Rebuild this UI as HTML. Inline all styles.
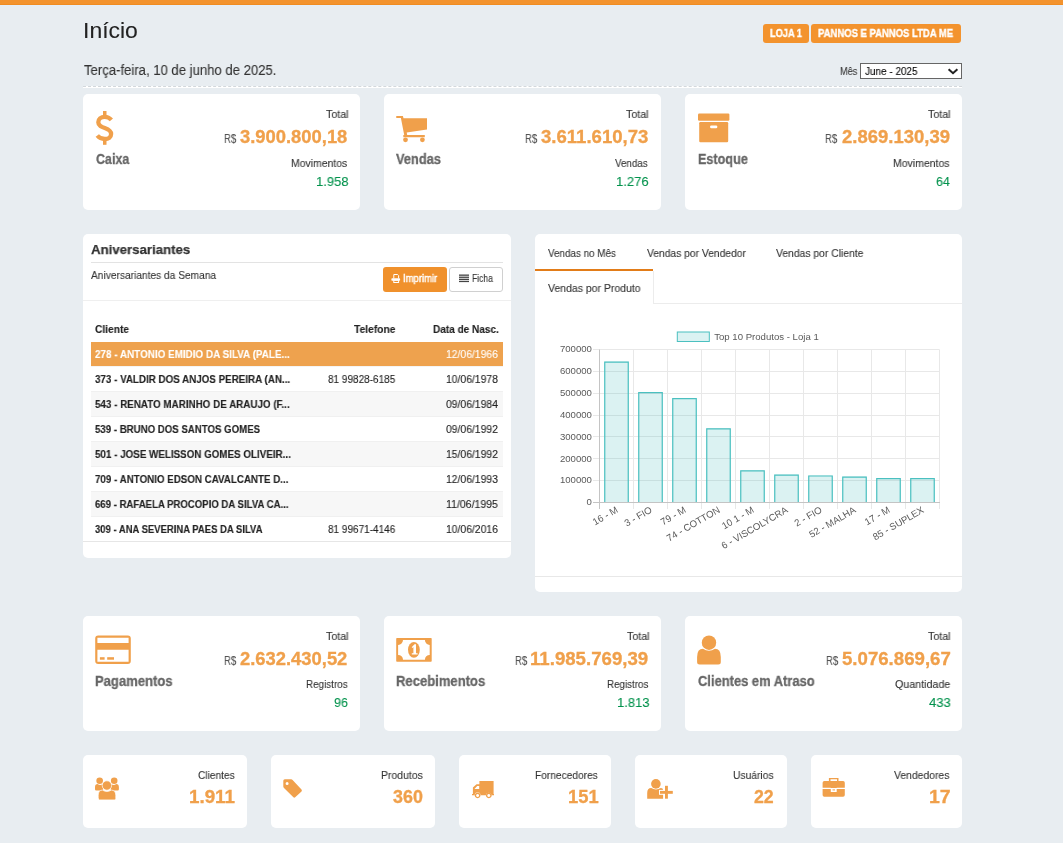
<!DOCTYPE html>
<html><head><meta charset="utf-8"><title>Início</title>
<style>
html,body{margin:0;padding:0;}
body{width:1063px;height:843px;overflow:hidden;background:#e8edf1;position:relative;font-family:"Liberation Sans",sans-serif;}
.t{position:absolute;white-space:nowrap;transform-origin:0 0;will-change:transform;font-family:"Liberation Sans",sans-serif;}
.a{position:absolute;}
.box{position:absolute;background:#fff;border-radius:5px;}
.ln{position:absolute;height:1px;}
svg.ic{position:absolute;left:0;top:0;overflow:visible;will-change:transform;}
</style></head><body>
<!-- top bar -->
<div class="a" style="left:0;top:0;width:1063px;height:4px;background:#f3932e"></div>
<div class="a" style="left:0;top:4px;width:1063px;height:1px;background:#f08c22"></div>
<div class="a" style="left:0;top:5px;width:1063px;height:1px;background:#e4eef8"></div>

<!-- badges -->
<div class="a" style="left:763px;top:24px;width:46px;height:19px;background:#f3932e;border-radius:3px"></div>
<div class="a" style="left:811px;top:24px;width:150px;height:19px;background:#f3932e;border-radius:3px"></div>

<!-- select -->
<div class="a" style="left:860px;top:63px;width:100px;height:14px;border:1px solid #666;background:#fff"></div>
<svg class="ic" width="1063" height="843" style="width:1063px;height:843px"><path d="M948.6,69.3 L953,73.2 L957.4,69.3" fill="none" stroke="#222" stroke-width="2.1"/></svg>

<!-- dashed separator -->
<div class="a" style="left:83px;top:86px;width:879px;height:2px;background:#fff"></div>
<div class="a" style="left:83px;top:86px;width:879px;height:0;border-top:1px dashed #d3d8dc"></div>

<!-- row 1 cards -->
<div class="box" style="left:83px;top:94px;width:277px;height:116px"></div>
<div class="box" style="left:384px;top:94px;width:277px;height:116px"></div>
<div class="box" style="left:685px;top:94px;width:277px;height:116px"></div>

<!-- aniversariantes panel -->
<div class="box" style="left:83px;top:234px;width:428px;height:324px"></div>
<div class="ln" style="left:91px;top:262px;width:412px;background:#e3e3e3"></div>
<div class="a" style="left:383px;top:267px;width:64px;height:25px;background:#f0912c;border-radius:3px"></div>
<div class="a" style="left:449px;top:267px;width:52px;height:23px;background:#fff;border:1px solid #d0d0d0;border-radius:3px"></div>
<div class="ln" style="left:83px;top:300px;width:428px;background:#efefef"></div>
<div class="a" style="left:91px;top:342px;width:412px;height:24px;background:#eea24e"></div>
<div class="ln" style="left:91px;top:366px;width:412px;background:#f4f4f4"></div>
<div class="ln" style="left:91px;top:391px;width:412px;background:#f0f0f0"></div>
<div class="a" style="left:91px;top:392px;width:412px;height:25px;background:#f7f7f7"></div>
<div class="ln" style="left:91px;top:416px;width:412px;background:#f0f0f0"></div>
<div class="ln" style="left:91px;top:441px;width:412px;background:#f0f0f0"></div>
<div class="a" style="left:91px;top:442px;width:412px;height:25px;background:#f7f7f7"></div>
<div class="ln" style="left:91px;top:466px;width:412px;background:#f0f0f0"></div>
<div class="ln" style="left:91px;top:491px;width:412px;background:#f0f0f0"></div>
<div class="a" style="left:91px;top:492px;width:412px;height:25px;background:#f7f7f7"></div>
<div class="ln" style="left:91px;top:516px;width:412px;background:#f0f0f0"></div>
<div class="ln" style="left:83px;top:541px;width:428px;background:#e6e6e6"></div>

<!-- chart panel -->
<div class="box" style="left:535px;top:234px;width:427px;height:358px"></div>
<div class="a" style="left:535px;top:269px;width:118px;height:2px;background:#e27c18"></div>
<div class="a" style="left:653px;top:271px;width:1px;height:33px;background:#ececec"></div>
<div class="ln" style="left:653px;top:303px;width:309px;background:#ececec"></div>
<div class="ln" style="left:535px;top:576px;width:427px;background:#e8e8e8"></div>
<svg class="ic" width="1063" height="843" style="width:1063px;height:843px">
<g stroke="#e8e8e8" stroke-width="1" fill="none">
<path d="M593,502.5 H939.5"/>
<path d="M593,480.5 H939.5"/>
<path d="M593,458.5 H939.5"/>
<path d="M593,436.5 H939.5"/>
<path d="M593,415.5 H939.5"/>
<path d="M593,393.5 H939.5"/>
<path d="M593,371.5 H939.5"/>
<path d="M593,349.5 H939.5"/>
<path d="M599.5,349.5 V509"/>
<path d="M633.5,349.5 V509"/>
<path d="M667.5,349.5 V509"/>
<path d="M701.5,349.5 V509"/>
<path d="M735.5,349.5 V509"/>
<path d="M769.5,349.5 V509"/>
<path d="M803.5,349.5 V509"/>
<path d="M837.5,349.5 V509"/>
<path d="M871.5,349.5 V509"/>
<path d="M905.5,349.5 V509"/>
<path d="M939.5,349.5 V509"/>
</g>
<rect x="604.25" y="361.52" width="24.50" height="140.98" fill="rgba(75,192,192,0.2)"/>
<path d="M604.75,502.5 V362.12 H628.25 V502.5" fill="none" stroke="rgb(75,192,192)" stroke-width="1.2"/>
<rect x="638.25" y="392.12" width="24.50" height="110.38" fill="rgba(75,192,192,0.2)"/>
<path d="M638.75,502.5 V392.72 H662.25 V502.5" fill="none" stroke="rgb(75,192,192)" stroke-width="1.2"/>
<rect x="672.25" y="398.02" width="24.50" height="104.48" fill="rgba(75,192,192,0.2)"/>
<path d="M672.75,502.5 V398.62 H696.25 V502.5" fill="none" stroke="rgb(75,192,192)" stroke-width="1.2"/>
<rect x="706.25" y="428.19" width="24.50" height="74.31" fill="rgba(75,192,192,0.2)"/>
<path d="M706.75,502.5 V428.79 H730.25 V502.5" fill="none" stroke="rgb(75,192,192)" stroke-width="1.2"/>
<rect x="740.25" y="470.37" width="24.50" height="32.13" fill="rgba(75,192,192,0.2)"/>
<path d="M740.75,502.5 V470.97 H764.25 V502.5" fill="none" stroke="rgb(75,192,192)" stroke-width="1.2"/>
<rect x="774.25" y="474.52" width="24.50" height="27.98" fill="rgba(75,192,192,0.2)"/>
<path d="M774.75,502.5 V475.12 H798.25 V502.5" fill="none" stroke="rgb(75,192,192)" stroke-width="1.2"/>
<rect x="808.25" y="475.40" width="24.50" height="27.10" fill="rgba(75,192,192,0.2)"/>
<path d="M808.75,502.5 V476.00 H832.25 V502.5" fill="none" stroke="rgb(75,192,192)" stroke-width="1.2"/>
<rect x="842.25" y="476.49" width="24.50" height="26.01" fill="rgba(75,192,192,0.2)"/>
<path d="M842.75,502.5 V477.09 H866.25 V502.5" fill="none" stroke="rgb(75,192,192)" stroke-width="1.2"/>
<rect x="876.25" y="478.02" width="24.50" height="24.48" fill="rgba(75,192,192,0.2)"/>
<path d="M876.75,502.5 V478.62 H900.25 V502.5" fill="none" stroke="rgb(75,192,192)" stroke-width="1.2"/>
<rect x="910.25" y="478.02" width="24.50" height="24.48" fill="rgba(75,192,192,0.2)"/>
<path d="M910.75,502.5 V478.62 H934.25 V502.5" fill="none" stroke="rgb(75,192,192)" stroke-width="1.2"/>
<path d="M599.5,349.5 V509 M593,502.5 H940" stroke="#c4c4c4" stroke-width="1" fill="none"/>
<g font-family="Liberation Sans" font-size="9.6" fill="#5a5a5a">
<text x="591.9" y="505.30" text-anchor="end">0</text>
<text x="591.9" y="483.44" text-anchor="end">100000</text>
<text x="591.9" y="461.59" text-anchor="end">200000</text>
<text x="591.9" y="439.73" text-anchor="end">300000</text>
<text x="591.9" y="417.87" text-anchor="end">400000</text>
<text x="591.9" y="396.02" text-anchor="end">500000</text>
<text x="591.9" y="374.16" text-anchor="end">600000</text>
<text x="591.9" y="352.30" text-anchor="end">700000</text>
<rect x="677.3" y="332" width="32" height="9.5" fill="rgba(75,192,192,0.2)" stroke="rgb(75,192,192)" stroke-width="1"/>
<text x="714.2" y="340.2">Top 10 Produtos - Loja 1</text>
<text transform="translate(617.00,509.00) rotate(-30)" text-anchor="end" y="3.3">16 - M</text>
<text transform="translate(651.00,509.00) rotate(-30)" text-anchor="end" y="3.3">3 - FIO</text>
<text transform="translate(685.00,509.00) rotate(-30)" text-anchor="end" y="3.3">79 - M</text>
<text transform="translate(719.00,509.00) rotate(-30)" text-anchor="end" y="3.3">74 - COTTON</text>
<text transform="translate(753.00,509.00) rotate(-30)" text-anchor="end" y="3.3">10 1 - M</text>
<text transform="translate(787.00,509.00) rotate(-30)" text-anchor="end" y="3.3">6 - VISCOLYCRA</text>
<text transform="translate(821.00,509.00) rotate(-30)" text-anchor="end" y="3.3">2 - FIO</text>
<text transform="translate(855.00,509.00) rotate(-30)" text-anchor="end" y="3.3">52 - MALHA</text>
<text transform="translate(889.00,509.00) rotate(-30)" text-anchor="end" y="3.3">17 - M</text>
<text transform="translate(923.00,509.00) rotate(-30)" text-anchor="end" y="3.3">85 - SUPLEX</text>
</g></svg>

<!-- row 3 cards -->
<div class="box" style="left:83px;top:616px;width:277px;height:115px"></div>
<div class="box" style="left:384px;top:616px;width:277px;height:115px"></div>
<div class="box" style="left:685px;top:616px;width:277px;height:115px"></div>

<!-- row 4 small cards -->
<div class="box" style="left:83px;top:755px;width:164px;height:73px"></div>
<div class="box" style="left:271px;top:755px;width:164px;height:73px"></div>
<div class="box" style="left:459px;top:755px;width:152px;height:73px"></div>
<div class="box" style="left:635px;top:755px;width:152px;height:73px"></div>
<div class="box" style="left:811px;top:755px;width:151px;height:73px"></div>

<!-- icons -->
<svg class="ic" width="1063" height="843" style="width:1063px;height:843px">
<g fill="#f0a04b">
  <!-- dollar -->
  <rect x="103" y="111" width="3.5" height="5"/>
  <rect x="103" y="139.5" width="3.5" height="5.3"/>
  <!-- cart -->
  <path d="M396,117 Q396,116 397,116 H402.9 L403.5,118.3 H427 V129.5 L406.7,132.6 L407.2,135 H424.8 V137.2 H403.3 V135 H404.2 L400.9,118.1 H397 Q396,118.1 396,117 Z"/>
  <circle cx="405.5" cy="139.8" r="2.4"/>
  <circle cx="422.4" cy="139.8" r="2.4"/>
  <!-- archive box -->
  <rect x="698" y="113.6" width="31.4" height="7.1" rx="1.2"/>
  <rect x="699.2" y="122" width="29" height="20.2" rx="1.2"/>
  <!-- credit card -->
  <path fill-rule="evenodd" d="M98.2,635.6 H127.8 Q130.8,635.6 130.8,638.6 V661 Q130.8,664 127.8,664 H98.2 Q95.2,664 95.2,661 V638.6 Q95.2,635.6 98.2,635.6 Z M97.4,637.8 V643.1 H128.6 V637.8 Z M97.4,649.7 V661.8 H128.6 V649.7 Z"/>
  <rect x="99.9" y="657.2" width="4.7" height="2.5"/>
  <rect x="107.2" y="657.2" width="6.8" height="2.5"/>
  <!-- money -->
  <path fill-rule="evenodd" d="M397,638 H431 Q431.7,638 431.7,638.7 V661 Q431.7,661.7 431,661.7 H397 Q396.2,661.7 396.2,661 V638.7 Q396.2,638 397,638 Z M403,640.1 A4.8,4.8 0 0 1 398.1,644.9 V654.9 A4.8,4.8 0 0 1 403,659.7 H424.9 A4.8,4.8 0 0 1 429.7,654.9 V644.9 A4.8,4.8 0 0 1 424.9,640.1 Z"/>
  <ellipse cx="413.9" cy="649.8" rx="5.9" ry="7.9"/>
  <!-- user -->
  <circle cx="709" cy="642.7" r="7.2"/>
  <path d="M697.1,664.5 V657 Q697.1,648.7 703,648.7 Q706,650.7 709,650.7 Q712,650.7 715,648.7 Q720.8,648.7 720.8,657 V662 Q720.8,664.5 718.3,664.5 H699.6 Q697.1,664.5 697.1,662 Z"/>
  <!-- users group -->
  <circle cx="99.65" cy="780.8" r="3.3"/>
  <circle cx="114.2" cy="780.8" r="3.3"/>
  <path d="M95,789.2 V787.2 C95,785.3 96,784.1 97.6,784.1 C98.5,784.7 99.4,784.9 100.2,784.9 C101,784.9 101.8,784.7 102.6,784.3 L103.2,790.4 H96.2 Q95,790.4 95,789.2 Z"/>
  <path d="M118.9,789.2 V787.2 C118.9,785.3 117.9,784.1 116.3,784.1 C115.4,784.7 114.5,784.9 113.7,784.9 C112.9,784.9 112.1,784.7 111.3,784.3 L110.7,790.4 H117.7 Q118.9,790.4 118.9,789.2 Z"/>
  <circle cx="106.9" cy="785.5" r="4.7" stroke="#fff" stroke-width="0.7"/>
  <path d="M98.2,799.8 V795.2 C98.2,792 99.8,790.1 102.4,790.1 C103.9,791 105.4,791.5 106.9,791.5 C108.4,791.5 109.9,791 111.4,790.1 C114,790.1 115.8,792 115.8,795.2 V798.5 Q115.8,799.9 114.4,799.9 H99.6 Q98.2,799.9 98.2,798.5 Z" stroke="#fff" stroke-width="0.7"/>
  <!-- tag -->
  <path fill-rule="evenodd" d="M284.8,779.3 H291.2 Q292,779.3 292.6,779.9 L301.5,789.6 Q302.3,790.5 301.5,791.4 L295.2,797.3 Q294.3,798.1 293.4,797.3 L284,788 Q283.3,787.3 283.3,786.4 V780.8 Q283.3,779.3 284.8,779.3 Z M287.1,782 A1.5,1.5 0 1 0 287.1,785 A1.5,1.5 0 1 0 287.1,782 Z"/>
  <!-- truck -->
  <path fill-rule="evenodd" d="M479.4,781.1 H493.6 V794 H494 V795.2 H491.6 A2.9,2.9 0 0 0 485.9,795.2 H480.5 A2.9,2.9 0 0 0 474.7,795.2 H472 V794 H472.9 V787.5 L476.5,784.2 H479.4 Z M474.5,789 H479.2 V785.9 H477.2 Z"/>
  <path fill-rule="evenodd" d="M477.6,792.5 A2.9,2.9 0 1 1 477.59,792.5 Z M477.6,793.9 A1.5,1.5 0 1 0 477.61,793.9 Z"/>
  <path fill-rule="evenodd" d="M488.8,792.5 A2.9,2.9 0 1 1 488.79,792.5 Z M488.8,793.9 A1.5,1.5 0 1 0 488.81,793.9 Z"/>
  <!-- user plus -->
  <circle cx="655.9" cy="783.9" r="4.8"/>
  <path d="M647.2,798.7 V793 Q647.2,788.1 651.2,788.1 Q653.5,789.4 656,789.4 Q658.5,789.4 660.8,788.1 Q663.1,788.1 663.1,790 V798.7 Z"/>
  <rect x="659" y="789.9" width="14.8" height="4.9" fill="#fff"/>
  <rect x="664" y="784.8" width="4.9" height="14.9" fill="#fff"/>
  <rect x="665" y="785.8" width="2.9" height="12.9"/>
  <rect x="660" y="790.9" width="12.8" height="2.9"/>
  <!-- briefcase -->
  <path fill-rule="evenodd" d="M828.9,777.9 H838.5 V781.1 H837 V779.3 H830.5 V781.1 H828.9 Z"/>
  <path d="M822.6,787.7 V782.8 Q822.6,781.1 824.3,781.1 H843.1 Q844.8,781.1 844.8,782.8 V787.7 H836.7 V788 H830.8 V787.7 Z"/>
  <path d="M822.6,789.1 H830.8 V792 H836.7 V789.1 H844.8 V795.1 Q844.8,796.8 843.1,796.8 H824.3 Q822.6,796.8 822.6,795.1 Z"/>
  <rect x="832.5" y="789.4" width="2.5" height="1"/>
</g>
<!-- dollar S -->
<path d="M111.4,119.9 C109.6,117.9 107.5,116.8 104.8,116.8 C100.8,116.8 98.3,119 98.3,122.2 C98.3,125.8 101.5,126.9 104.8,128 C108.5,129.3 111.1,130.6 111.1,134 C111.1,137.3 108.5,139 104.8,139 C101.5,139 99,137.6 97.3,135.5" fill="none" stroke="#f0a04b" stroke-width="4.3"/>
<!-- archive slot -->
<rect x="710.1" y="125.4" width="7.2" height="2.9" rx="1.2" fill="#fff"/>
<!-- money "1" -->
<path d="M411.7,647.2 L414.5,644.3 H416 V653.2 H417.6 V654.6 H411.8 V653.2 H413.4 V647.1 L412.6,647.9 Z" fill="#fff"/>
<!-- printer -->
<g fill="none" stroke="#fff" stroke-width="1">
  <path d="M393.8,278.4 V274.5 H397.6 L398.6,275.5 V278.4"/>
  <rect x="393.8" y="280.2" width="4.8" height="2.3"/>
</g>
<rect x="391.4" y="278.2" width="8.7" height="2.6" rx="0.8" fill="#fff"/>
<!-- list icon -->
<g fill="#444">
  <rect x="459" y="274.5" width="10" height="1.3"/>
  <rect x="459" y="276.6" width="10" height="1.3"/>
  <rect x="459" y="278.7" width="10" height="1.3"/>
  <rect x="459" y="280.8" width="10" height="1.3"/>
</g>
</svg>

<div class="t" style="left:82.66px;top:20px;font-size:22.5px;line-height:22.5px;color:#222;-webkit-text-stroke:0.1px currentColor;transform:scaleX(1.0202);">Início</div>
<div class="t" style="left:84.00px;top:63px;font-size:14px;line-height:14px;color:#333;-webkit-text-stroke:0.1px currentColor;transform:scaleX(0.9365);">Terça-feira, 10 de junho de 2025.</div>
<div class="t" style="left:769.60px;top:28px;font-size:10.5px;line-height:10.5px;color:#fff;font-weight:bold;-webkit-text-stroke:0.35px currentColor;transform:scaleX(0.8776);">LOJA 1</div>
<div class="t" style="left:817.70px;top:28px;font-size:10.5px;line-height:10.5px;color:#fff;font-weight:bold;-webkit-text-stroke:0.35px currentColor;transform:scaleX(0.9038);">PANNOS E PANNOS LTDA ME</div>
<div class="t" style="left:840.00px;top:66px;font-size:11px;line-height:11px;color:#333;-webkit-text-stroke:0.1px currentColor;transform:scaleX(0.8317);">Mês</div>
<div class="t" style="left:864.60px;top:66px;font-size:11px;line-height:11px;color:#000;-webkit-text-stroke:0.1px currentColor;transform:scaleX(0.9037);">June - 2025</div>
<div class="t" style="left:95.80px;top:152px;font-size:14px;line-height:14px;color:#666;font-weight:bold;-webkit-text-stroke:0.3px currentColor;transform:scaleX(0.8916);">Caixa</div>
<div class="t" style="left:325.60px;top:109px;font-size:11px;line-height:11px;color:#333;-webkit-text-stroke:0.1px currentColor;transform:scaleX(0.9697);">Total</div>
<div class="t" style="left:223.50px;top:133px;font-size:12px;line-height:12px;color:#555;-webkit-text-stroke:0.1px currentColor;transform:scaleX(0.7915);">R$</div>
<div class="t" style="left:240.10px;top:129px;font-size:17.5px;line-height:17.5px;color:#f0a04b;font-weight:bold;-webkit-text-stroke:0.3px currentColor;transform:scaleX(1.0503);">3.900.800,18</div>
<div class="t" style="left:291.00px;top:158px;font-size:11px;line-height:11px;color:#333;-webkit-text-stroke:0.1px currentColor;transform:scaleX(0.9482);">Movimentos</div>
<div class="t" style="left:315.64px;top:175px;font-size:13.5px;line-height:13.5px;color:#00924c;-webkit-text-stroke:0.1px currentColor;transform:scaleX(0.9636);">1.958</div>
<div class="t" style="left:396.30px;top:152px;font-size:14px;line-height:14px;color:#666;font-weight:bold;-webkit-text-stroke:0.3px currentColor;transform:scaleX(0.9159);">Vendas</div>
<div class="t" style="left:626.40px;top:109px;font-size:11px;line-height:11px;color:#333;-webkit-text-stroke:0.1px currentColor;transform:scaleX(0.9697);">Total</div>
<div class="t" style="left:524.60px;top:133px;font-size:12px;line-height:12px;color:#555;-webkit-text-stroke:0.1px currentColor;transform:scaleX(0.7915);">R$</div>
<div class="t" style="left:540.90px;top:129px;font-size:17.5px;line-height:17.5px;color:#f0a04b;font-weight:bold;-webkit-text-stroke:0.3px currentColor;transform:scaleX(1.0603);">3.611.610,73</div>
<div class="t" style="left:615.40px;top:158px;font-size:11px;line-height:11px;color:#333;-webkit-text-stroke:0.1px currentColor;transform:scaleX(0.8898);">Vendas</div>
<div class="t" style="left:616.33px;top:175px;font-size:13.5px;line-height:13.5px;color:#00924c;-webkit-text-stroke:0.1px currentColor;transform:scaleX(0.9667);">1.276</div>
<div class="t" style="left:697.80px;top:152px;font-size:14px;line-height:14px;color:#666;font-weight:bold;-webkit-text-stroke:0.3px currentColor;transform:scaleX(0.9019);">Estoque</div>
<div class="t" style="left:927.90px;top:109px;font-size:11px;line-height:11px;color:#333;-webkit-text-stroke:0.1px currentColor;transform:scaleX(0.9697);">Total</div>
<div class="t" style="left:825.30px;top:133px;font-size:12px;line-height:12px;color:#555;-webkit-text-stroke:0.1px currentColor;transform:scaleX(0.7915);">R$</div>
<div class="t" style="left:841.70px;top:129px;font-size:17.5px;line-height:17.5px;color:#f0a04b;font-weight:bold;-webkit-text-stroke:0.3px currentColor;transform:scaleX(1.0571);">2.869.130,39</div>
<div class="t" style="left:893.00px;top:158px;font-size:11px;line-height:11px;color:#333;-webkit-text-stroke:0.1px currentColor;transform:scaleX(0.9532);">Movimentos</div>
<div class="t" style="left:935.70px;top:175px;font-size:13.5px;line-height:13.5px;color:#00924c;-webkit-text-stroke:0.1px currentColor;transform:scaleX(0.9221);">64</div>
<div class="t" style="left:95.20px;top:674px;font-size:14px;line-height:14px;color:#666;font-weight:bold;-webkit-text-stroke:0.3px currentColor;transform:scaleX(0.9310);">Pagamentos</div>
<div class="t" style="left:325.60px;top:631px;font-size:11px;line-height:11px;color:#333;-webkit-text-stroke:0.1px currentColor;transform:scaleX(0.9697);">Total</div>
<div class="t" style="left:223.50px;top:655px;font-size:12px;line-height:12px;color:#555;-webkit-text-stroke:0.1px currentColor;transform:scaleX(0.7915);">R$</div>
<div class="t" style="left:240.10px;top:651px;font-size:17.5px;line-height:17.5px;color:#f0a04b;font-weight:bold;-webkit-text-stroke:0.3px currentColor;transform:scaleX(1.0503);">2.632.430,52</div>
<div class="t" style="left:305.60px;top:679px;font-size:11px;line-height:11px;color:#333;-webkit-text-stroke:0.1px currentColor;transform:scaleX(0.8965);">Registros</div>
<div class="t" style="left:334.20px;top:696px;font-size:13.5px;line-height:13.5px;color:#00924c;-webkit-text-stroke:0.1px currentColor;transform:scaleX(0.9305);">96</div>
<div class="t" style="left:396.20px;top:674px;font-size:14px;line-height:14px;color:#666;font-weight:bold;-webkit-text-stroke:0.3px currentColor;transform:scaleX(0.9321);">Recebimentos</div>
<div class="t" style="left:626.50px;top:631px;font-size:11px;line-height:11px;color:#333;-webkit-text-stroke:0.1px currentColor;transform:scaleX(0.9697);">Total</div>
<div class="t" style="left:514.70px;top:655px;font-size:12px;line-height:12px;color:#555;-webkit-text-stroke:0.1px currentColor;transform:scaleX(0.7915);">R$</div>
<div class="t" style="left:530.13px;top:651px;font-size:17.5px;line-height:17.5px;color:#f0a04b;font-weight:bold;-webkit-text-stroke:0.3px currentColor;transform:scaleX(1.0652);">11.985.769,39</div>
<div class="t" style="left:606.80px;top:679px;font-size:11px;line-height:11px;color:#333;-webkit-text-stroke:0.1px currentColor;transform:scaleX(0.8901);">Registros</div>
<div class="t" style="left:616.54px;top:696px;font-size:13.5px;line-height:13.5px;color:#00924c;-webkit-text-stroke:0.1px currentColor;transform:scaleX(0.9636);">1.813</div>
<div class="t" style="left:697.50px;top:674px;font-size:14px;line-height:14px;color:#666;font-weight:bold;-webkit-text-stroke:0.3px currentColor;transform:scaleX(0.9234);">Clientes em Atraso</div>
<div class="t" style="left:927.70px;top:631px;font-size:11px;line-height:11px;color:#333;-webkit-text-stroke:0.1px currentColor;transform:scaleX(0.9697);">Total</div>
<div class="t" style="left:825.70px;top:655px;font-size:12px;line-height:12px;color:#555;-webkit-text-stroke:0.1px currentColor;transform:scaleX(0.7915);">R$</div>
<div class="t" style="left:841.80px;top:651px;font-size:17.5px;line-height:17.5px;color:#f0a04b;font-weight:bold;-webkit-text-stroke:0.3px currentColor;transform:scaleX(1.0646);">5.076.869,67</div>
<div class="t" style="left:894.70px;top:679px;font-size:11px;line-height:11px;color:#333;-webkit-text-stroke:0.1px currentColor;transform:scaleX(0.9707);">Quantidade</div>
<div class="t" style="left:928.50px;top:696px;font-size:13.5px;line-height:13.5px;color:#00924c;-webkit-text-stroke:0.1px currentColor;transform:scaleX(0.9675);">433</div>
<div class="t" style="left:197.70px;top:770px;font-size:11px;line-height:11px;color:#333;-webkit-text-stroke:0.1px currentColor;transform:scaleX(0.9244);">Clientes</div>
<div class="t" style="left:188.63px;top:789px;font-size:17.5px;line-height:17.5px;color:#f0a04b;font-weight:bold;-webkit-text-stroke:0.3px currentColor;transform:scaleX(1.0738);">1.911</div>
<div class="t" style="left:380.90px;top:770px;font-size:11px;line-height:11px;color:#333;-webkit-text-stroke:0.1px currentColor;transform:scaleX(0.9500);">Produtos</div>
<div class="t" style="left:393.10px;top:789px;font-size:17.5px;line-height:17.5px;color:#f0a04b;font-weight:bold;-webkit-text-stroke:0.3px currentColor;transform:scaleX(1.0215);">360</div>
<div class="t" style="left:535.30px;top:770px;font-size:11px;line-height:11px;color:#333;-webkit-text-stroke:0.1px currentColor;transform:scaleX(0.9259);">Fornecedores</div>
<div class="t" style="left:567.75px;top:789px;font-size:17.5px;line-height:17.5px;color:#f0a04b;font-weight:bold;-webkit-text-stroke:0.3px currentColor;transform:scaleX(1.0469);">151</div>
<div class="t" style="left:733.40px;top:770px;font-size:11px;line-height:11px;color:#333;-webkit-text-stroke:0.1px currentColor;transform:scaleX(0.9339);">Usuários</div>
<div class="t" style="left:754.40px;top:789px;font-size:17.5px;line-height:17.5px;color:#f0a04b;font-weight:bold;-webkit-text-stroke:0.3px currentColor;transform:scaleX(1.0135);">22</div>
<div class="t" style="left:894.30px;top:770px;font-size:11px;line-height:11px;color:#333;-webkit-text-stroke:0.1px currentColor;transform:scaleX(0.9440);">Vendedores</div>
<div class="t" style="left:929.39px;top:789px;font-size:17.5px;line-height:17.5px;color:#f0a04b;font-weight:bold;-webkit-text-stroke:0.3px currentColor;transform:scaleX(1.1109);">17</div>
<div class="t" style="left:91.30px;top:243px;font-size:13.5px;line-height:13.5px;color:#333;font-weight:bold;-webkit-text-stroke:0.25px currentColor;transform:scaleX(0.9802);">Aniversariantes</div>
<div class="t" style="left:91.30px;top:270px;font-size:11px;line-height:11px;color:#333;-webkit-text-stroke:0.1px currentColor;transform:scaleX(0.9256);">Aniversariantes da Semana</div>
<div class="t" style="left:402.60px;top:274px;font-size:10px;line-height:10px;color:#fff;-webkit-text-stroke:0.4px currentColor;transform:scaleX(0.9491);">Imprimir</div>
<div class="t" style="left:472.30px;top:274px;font-size:10px;line-height:10px;color:#333;-webkit-text-stroke:0.1px currentColor;transform:scaleX(0.8517);">Ficha</div>
<div class="t" style="left:95.30px;top:324px;font-size:11px;line-height:11px;color:#222;font-weight:bold;-webkit-text-stroke:0.12px currentColor;transform:scaleX(0.9273);">Cliente</div>
<div class="t" style="left:354.20px;top:324px;font-size:11px;line-height:11px;color:#222;font-weight:bold;-webkit-text-stroke:0.12px currentColor;transform:scaleX(0.9346);">Telefone</div>
<div class="t" style="left:432.50px;top:324px;font-size:11px;line-height:11px;color:#222;font-weight:bold;-webkit-text-stroke:0.12px currentColor;transform:scaleX(0.9128);">Data de Nasc.</div>
<div class="t" style="left:95.30px;top:349px;font-size:11px;line-height:11px;color:#fff;font-weight:bold;-webkit-text-stroke:0.12px currentColor;transform:scaleX(0.8985);">278 - ANTONIO EMIDIO DA SILVA (PALE...</div>
<div class="t" style="left:446.40px;top:349px;font-size:11px;line-height:11px;color:#fff;-webkit-text-stroke:0.1px currentColor;transform:scaleX(0.9429);">12/06/1966</div>
<div class="t" style="left:95.30px;top:374px;font-size:11px;line-height:11px;color:#222;font-weight:bold;-webkit-text-stroke:0.12px currentColor;transform:scaleX(0.8909);">373 - VALDIR DOS ANJOS PEREIRA (AN...</div>
<div class="t" style="left:328.30px;top:374px;font-size:11px;line-height:11px;color:#222;-webkit-text-stroke:0.1px currentColor;transform:scaleX(0.9080);">81 99828-6185</div>
<div class="t" style="left:446.40px;top:374px;font-size:11px;line-height:11px;color:#222;-webkit-text-stroke:0.1px currentColor;transform:scaleX(0.9429);">10/06/1978</div>
<div class="t" style="left:95.30px;top:399px;font-size:11px;line-height:11px;color:#222;font-weight:bold;-webkit-text-stroke:0.12px currentColor;transform:scaleX(0.8931);">543 - RENATO MARINHO DE ARAUJO (F...</div>
<div class="t" style="left:446.40px;top:399px;font-size:11px;line-height:11px;color:#222;-webkit-text-stroke:0.1px currentColor;transform:scaleX(0.9429);">09/06/1984</div>
<div class="t" style="left:95.30px;top:424px;font-size:11px;line-height:11px;color:#222;font-weight:bold;-webkit-text-stroke:0.12px currentColor;transform:scaleX(0.8774);">539 - BRUNO DOS SANTOS GOMES</div>
<div class="t" style="left:446.40px;top:424px;font-size:11px;line-height:11px;color:#222;-webkit-text-stroke:0.1px currentColor;transform:scaleX(0.9429);">09/06/1992</div>
<div class="t" style="left:95.30px;top:449px;font-size:11px;line-height:11px;color:#222;font-weight:bold;-webkit-text-stroke:0.12px currentColor;transform:scaleX(0.8925);">501 - JOSE WELISSON GOMES OLIVEIR...</div>
<div class="t" style="left:446.40px;top:449px;font-size:11px;line-height:11px;color:#222;-webkit-text-stroke:0.1px currentColor;transform:scaleX(0.9429);">15/06/1992</div>
<div class="t" style="left:95.30px;top:474px;font-size:11px;line-height:11px;color:#222;font-weight:bold;-webkit-text-stroke:0.12px currentColor;transform:scaleX(0.8880);">709 - ANTONIO EDSON CAVALCANTE D...</div>
<div class="t" style="left:446.40px;top:474px;font-size:11px;line-height:11px;color:#222;-webkit-text-stroke:0.1px currentColor;transform:scaleX(0.9429);">12/06/1993</div>
<div class="t" style="left:95.30px;top:499px;font-size:11px;line-height:11px;color:#222;font-weight:bold;-webkit-text-stroke:0.12px currentColor;transform:scaleX(0.8713);">669 - RAFAELA PROCOPIO DA SILVA CA...</div>
<div class="t" style="left:446.40px;top:499px;font-size:11px;line-height:11px;color:#222;-webkit-text-stroke:0.1px currentColor;transform:scaleX(0.9571);">11/06/1995</div>
<div class="t" style="left:95.30px;top:524px;font-size:11px;line-height:11px;color:#222;font-weight:bold;-webkit-text-stroke:0.12px currentColor;transform:scaleX(0.8606);">309 - ANA SEVERINA PAES DA SILVA</div>
<div class="t" style="left:328.30px;top:524px;font-size:11px;line-height:11px;color:#222;-webkit-text-stroke:0.1px currentColor;transform:scaleX(0.9080);">81 99671-4146</div>
<div class="t" style="left:446.40px;top:524px;font-size:11px;line-height:11px;color:#222;-webkit-text-stroke:0.1px currentColor;transform:scaleX(0.9429);">10/06/2016</div>
<div class="t" style="left:547.60px;top:248px;font-size:11px;line-height:11px;color:#333;-webkit-text-stroke:0.1px currentColor;transform:scaleX(0.8961);">Vendas no Mês</div>
<div class="t" style="left:646.60px;top:248px;font-size:11px;line-height:11px;color:#333;-webkit-text-stroke:0.1px currentColor;transform:scaleX(0.9345);">Vendas por Vendedor</div>
<div class="t" style="left:776.20px;top:248px;font-size:11px;line-height:11px;color:#333;-webkit-text-stroke:0.1px currentColor;transform:scaleX(0.9404);">Vendas por Cliente</div>
<div class="t" style="left:547.60px;top:283px;font-size:11px;line-height:11px;color:#333;-webkit-text-stroke:0.1px currentColor;transform:scaleX(0.9524);">Vendas por Produto</div>
</body></html>
